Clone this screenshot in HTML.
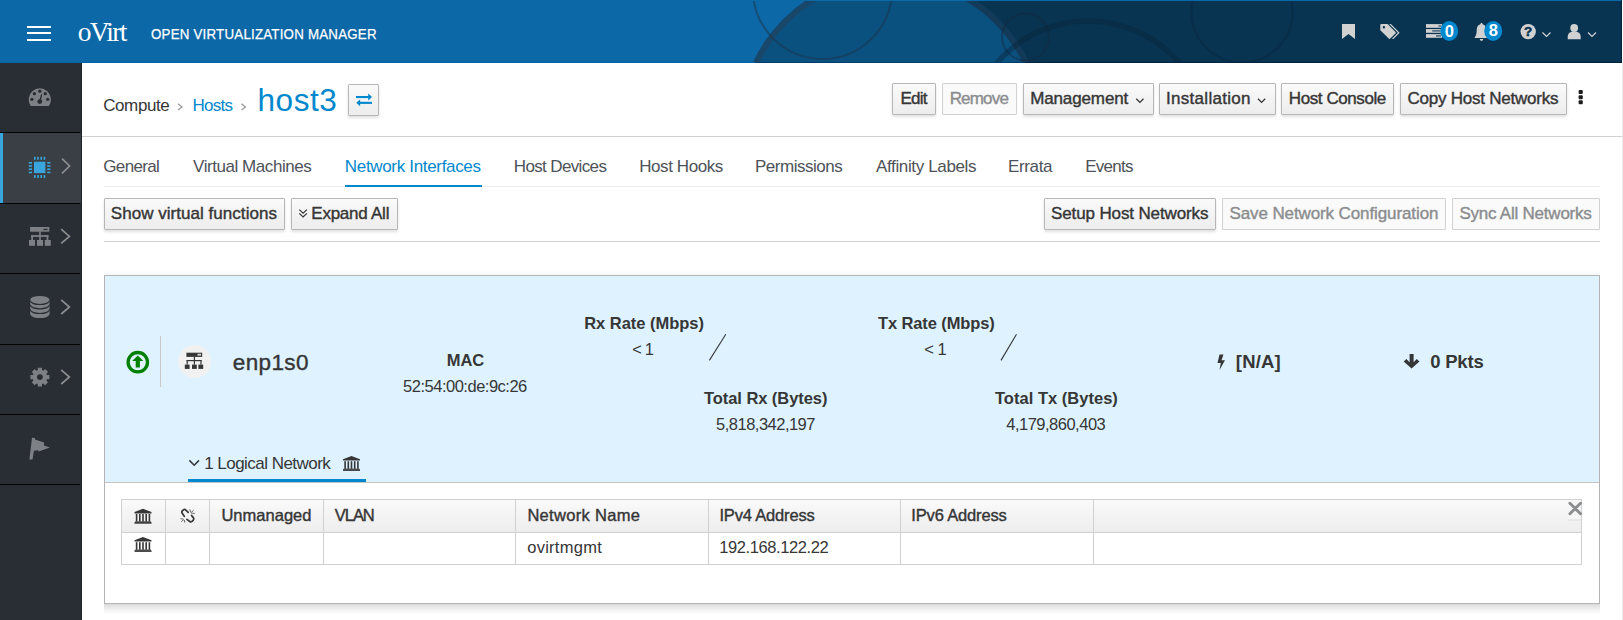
<!DOCTYPE html>
<html><head><meta charset="utf-8"><title>oVirt</title>
<style>
*{box-sizing:border-box}
html,body{margin:0;padding:0}
body{width:1623px;height:620px;overflow:hidden;position:relative;background:#fff;font-family:"Liberation Sans",sans-serif}
.a{position:absolute}
.t{position:absolute;white-space:nowrap}
.s{-webkit-text-stroke:0.4px currentColor}
.b{font-weight:bold}
.serif{font-family:"Liberation Serif",serif}
.btn{position:absolute;border:1px solid #b7b7b7;border-radius:1px;background:linear-gradient(#fafafa,#ededed);box-shadow:0 2px 3px rgba(3,3,3,.12)}
.btn.dis{background:#fafafa;border-color:#d1d1d1;box-shadow:none}
svg{position:absolute;overflow:visible}
</style></head><body>

<!-- ===== HEADER ===== -->
<div class="a" style="left:0;top:0;width:1622px;height:63px;overflow:hidden;background:#0d68a7">
<svg style="left:0;top:0" width="1623" height="63" viewBox="0 0 1623 63">
  <defs>
    <clipPath id="cl"><rect x="0" y="0" width="891" height="63"/></clipPath>
    <clipPath id="cr"><rect x="891" y="0" width="732" height="63"/></clipPath>
  </defs>
  <rect x="900" y="0" width="723" height="63" fill="#083452"/>
  <circle cx="891" cy="127" r="152.5" fill="#0b5180"/>
  <circle cx="891" cy="127" r="149.5" fill="none" stroke="rgb(40,60,80)" stroke-opacity="0.45" stroke-width="6" clip-path="url(#cl)"/>
  <circle cx="891" cy="127" r="149.5" fill="none" stroke="#133a58" stroke-width="6" clip-path="url(#cr)"/>
  <circle cx="822.5" cy="-10.5" r="69.5" fill="none" stroke="rgb(30,50,70)" stroke-opacity="0.5" stroke-width="2"/>
  <circle cx="1025.5" cy="37" r="23.5" fill="none" stroke="rgb(20,40,60)" stroke-opacity="0.45" stroke-width="2"/>
  <circle cx="1088" cy="141" r="120" fill="none" stroke="rgb(10,35,55)" stroke-opacity="0.42" stroke-width="5.5"/>
  <circle cx="1242" cy="12" r="50.5" fill="none" stroke="rgb(10,35,55)" stroke-opacity="0.35" stroke-width="2"/>
  <rect x="0" y="0" width="1623" height="1" fill="#0a6aa8"/>
  <rect x="0" y="62" width="755" height="1" fill="#0462a6"/><rect x="755" y="62" width="270" height="1" fill="#033d6a"/><rect x="1025" y="62" width="598" height="1" fill="#00223f"/>
  <rect x="1621" y="0" width="1" height="63" fill="#03243c"/>
</svg>
<!-- hamburger -->
<div class="a" style="left:27px;top:26px;width:24px;height:2px;background:#fff"></div>
<div class="a" style="left:27px;top:32px;width:24px;height:2px;background:#fff"></div>
<div class="a" style="left:27px;top:39px;width:24px;height:2px;background:#fff"></div>
</div>
<div class="t serif" style="left:77.8px;top:17.6px;font-size:27.5px;line-height:27.5px;letter-spacing:-1.7px;color:#fff">oVirt</div>

<!-- header icons -->
<svg style="left:0;top:0" width="1623" height="63">
  <g fill="#d1d1d1">
    <!-- bookmark -->
    <path d="M1342 24h13v15l-6.5-5-6.5 5z"/>
    <!-- tags -->
    <path fill-rule="evenodd" d="M1380.3 25.2Q1380.3 24.1 1381.4 24.1H1387.6L1395.7 32.3Q1396.1 32.8 1395.7 33.3L1390 38.8Q1389.5 39.3 1389 38.8L1380.3 30.2ZM1385.1 27.2A1.2 1.2 0 1 0 1382.7 27.2A1.2 1.2 0 1 0 1385.1 27.2Z"/>
    <path d="M1389.2 24.1H1390.9L1399.6 32.8L1393.5 38.9H1391.8L1397.9 32.8Z"/>
    <!-- tasks -->
    <rect x="1426" y="24.1" width="16" height="3.7"/>
    <rect x="1426" y="29.1" width="16" height="3.7"/>
    <rect x="1426" y="34.1" width="16" height="3.7"/>
    <!-- bell -->
    <path d="M1481.5 23c.8 0 1.1.6 1.1 1.3 2.5.6 3.7 2.8 3.7 5.7 0 3.4.5 5.6 2 7.2v.9h-13.6v-.9c1.5-1.6 2-3.8 2-7.2 0-2.9 1.2-5.1 3.7-5.7 0-.7.3-1.3 1.1-1.3zM1479.7 39.1h3.6a1.8 1.8 0 0 1-3.6 0z"/>
    <!-- help -->
    <circle cx="1528.2" cy="31.6" r="7.7"/>
    <!-- user -->
    <circle cx="1574.2" cy="28" r="3.9"/>
    <path d="M1567.7 39.2v-2.4c0-3.4 2.6-5.2 6.5-5.2s6.5 1.8 6.5 5.2v2.4z"/>
  </g>
  <g fill="#3d5a73">
    <rect x="1438.4" y="25.3" width="3" height="1.3"/>
    <rect x="1432.2" y="30.2" width="8" height="1.4"/>
    <rect x="1436" y="35.2" width="5" height="1.4"/>
  </g>
  <text x="1528.2" y="36.4" font-family="Liberation Sans" font-weight="bold" font-size="13.5" fill="#083452" stroke="#083452" stroke-width="0.5" text-anchor="middle">?</text>
  <g fill="none" stroke="#d1d1d1" stroke-width="1.2">
    <path d="M1542.5 32.5l4 4 4-4"/>
    <path d="M1588 32.5l4 4 4-4"/>
  </g>
  <ellipse cx="1449.2" cy="31" rx="9" ry="10" fill="#0088ce"/>
  <ellipse cx="1493.2" cy="31" rx="9" ry="10" fill="#0088ce"/>
  <text x="1449.3" y="36.5" font-family="Liberation Sans" font-weight="bold" font-size="16.5" fill="#fff" text-anchor="middle">0</text>
  <text x="1493.3" y="36.4" font-family="Liberation Sans" font-weight="bold" font-size="16.5" fill="#fff" text-anchor="middle">8</text>
</svg>

<!-- ===== SIDEBAR ===== -->
<div class="a" style="left:0;top:63px;width:82px;height:557px;background:#292e34;border-right:1px solid #1f2328"></div>
<div class="a" style="left:0;top:133px;width:81px;height:70px;background:#393f44"></div>
<div class="a" style="left:0;top:133px;width:3px;height:70px;background:#39a5dc"></div>
<div class="a" style="left:0;top:132px;width:80px;height:1px;background:#030303"></div>
<div class="a" style="left:0;top:203px;width:80px;height:1px;background:#030303"></div>
<div class="a" style="left:0;top:273px;width:80px;height:1px;background:#030303"></div>
<div class="a" style="left:0;top:344px;width:80px;height:1px;background:#030303"></div>
<div class="a" style="left:0;top:414px;width:80px;height:1px;background:#030303"></div>
<div class="a" style="left:0;top:484px;width:80px;height:1px;background:#030303"></div>
<svg style="left:0;top:0" width="82" height="620">
  <g fill="#7d8084">
    <!-- dashboard -->
    <path d="M30.7 106.1A11.2 11.2 0 1 1 48.9 106.1Z"/>
    <!-- network sitemap -->
    <rect x="30.1" y="227" width="19.2" height="4.7"/>
    <rect x="39.2" y="231.5" width="1.6" height="8.5"/>
    <rect x="31.2" y="235.1" width="17.2" height="1.8"/>
    <rect x="31.2" y="235.1" width="1.8" height="5"/>
    <rect x="46.6" y="235.1" width="1.8" height="5"/>
    <rect x="29" y="240" width="6" height="5.8"/>
    <rect x="37" y="240" width="6" height="5.8"/>
    <rect x="44.8" y="240" width="6" height="5.8"/>
    <!-- storage -->
    <rect x="30.2" y="300" width="19.3" height="14"/>
    <ellipse cx="39.85" cy="300" rx="9.65" ry="4.1"/>
    <ellipse cx="39.85" cy="314" rx="9.65" ry="4.1"/>
    <!-- gear -->
    <path fill-rule="evenodd" d="M37.77 370.12 L37.80 367.63 L42.00 367.63 L42.03 370.12 L43.33 370.65 L45.11 368.92 L48.08 371.89 L46.35 373.67 L46.88 374.97 L49.37 375.00 L49.37 379.20 L46.88 379.23 L46.35 380.53 L48.08 382.31 L45.11 385.28 L43.33 383.55 L42.03 384.08 L42.00 386.57 L37.80 386.57 L37.77 384.08 L36.47 383.55 L34.69 385.28 L31.72 382.31 L33.45 380.53 L32.92 379.23 L30.43 379.20 L30.43 375.00 L32.92 374.97 L33.45 373.67 L31.72 371.89 L34.69 368.92 L36.47 370.65 Z M42.80 377.10 A2.9 2.9 0 1 0 37.00 377.10 A2.9 2.9 0 1 0 42.80 377.10 Z"/>
    <!-- flag -->
    <path d="M32 437.8L35.1 438.1L34.9 439.6L44.1 442.6L43.9 445.5L49.9 447.5L38.7 451.4L38.1 450.2L33.9 450.8L32.5 459.5L29.4 459.5Z"/>
  </g>
  <g fill="#292e34">
    <circle cx="31.9" cy="99.3" r="1.65"/><circle cx="34.4" cy="93.7" r="1.65"/><circle cx="39.8" cy="91.2" r="1.65"/><circle cx="45.2" cy="93.7" r="1.65"/><circle cx="47.7" cy="99.3" r="1.65"/>
    <circle cx="39.8" cy="101.6" r="2.4"/>
    <path d="M39 101.5L41.1 94.3L42.2 94.6L40.6 101.9Z"/>
    <rect x="43.4" y="228.8" width="4.1" height="1.3"/>
  </g>
  <g fill="none" stroke="#292e34" stroke-width="1.2">
    <path d="M30.2 300.5A9.65 4 0 0 0 49.5 300.5"/>
    <path d="M30.2 304.8A9.65 4 0 0 0 49.5 304.8"/>
    <path d="M30.2 309.5A9.65 4 0 0 0 49.5 309.5"/>
  </g>
  <!-- cpu active -->
  <g fill="#39a5dc">
    <rect x="34" y="161.7" width="11.4" height="11.4"/>
    <rect x="34" y="156.8" width="1.6" height="3"/><rect x="37.2" y="156.8" width="1.6" height="3"/><rect x="40.4" y="156.8" width="1.6" height="3"/><rect x="43.6" y="156.8" width="1.6" height="3"/>
    <rect x="34" y="175" width="1.6" height="3"/><rect x="37.2" y="175" width="1.6" height="3"/><rect x="40.4" y="175" width="1.6" height="3"/><rect x="43.6" y="175" width="1.6" height="3"/>
    <rect x="28.8" y="162" width="3.2" height="1.6"/><rect x="28.8" y="165.2" width="3.2" height="1.6"/><rect x="28.8" y="168.4" width="3.2" height="1.6"/><rect x="28.8" y="171.6" width="3.2" height="1.6"/>
    <rect x="47.2" y="162" width="3.2" height="1.6"/><rect x="47.2" y="165.2" width="3.2" height="1.6"/><rect x="47.2" y="168.4" width="3.2" height="1.6"/><rect x="47.2" y="171.6" width="3.2" height="1.6"/>
  </g>
  <g fill="none" stroke="#8b8d8f" stroke-width="1.7">
    <path d="M62 158.6l7.6 7.4-7.6 7.4"/>
    <path d="M61.2 229.2l8.2 7.2-8.2 7"/>
    <path d="M61.2 299.8l8.2 7.2-8.2 7"/>
    <path d="M61.2 369.8l8.2 7.2-8.2 7"/>
  </g>
</svg>

<!-- ===== BREADCRUMB / TITLE ===== -->
<svg style="left:0;top:0" width="1623" height="140">
  <g fill="none" stroke="#9c9c9c" stroke-width="1.3">
    <path d="M178 103.7l4 3.2-4 3.2"/>
    <path d="M241.5 103.7l4 3.2-4 3.2"/>
  </g>
</svg>
<div class="btn" style="left:348px;top:84px;width:31px;height:32px"></div>
<svg style="left:0;top:0" width="1623" height="140">
  <g fill="#0088ce">
    <rect x="356" y="96" width="13" height="2.1"/>
    <path d="M368.2 93.6L372 97.05L368.2 100.5Z"/>
    <rect x="359" y="101.8" width="13" height="2.1"/>
    <path d="M360.1 99.4L356.3 102.85L360.1 106.3Z"/>
  </g>
</svg>
<div class="btn" style="left:892px;top:83px;width:44px;height:32px"></div>
<div class="btn dis" style="left:942px;top:83px;width:75px;height:32px"></div>
<div class="btn" style="left:1023px;top:83px;width:131px;height:32px"></div>
<div class="btn" style="left:1159px;top:83px;width:117px;height:32px"></div>
<div class="btn" style="left:1281px;top:83px;width:113px;height:32px"></div>
<div class="btn" style="left:1400px;top:83px;width:167px;height:32px"></div>
<svg style="left:0;top:0" width="1623" height="140">
  <g fill="none" stroke="#363636" stroke-width="1.3">
    <path d="M1136.3 98.8l3.6 3.6 3.6-3.6"/>
    <path d="M1258 98.8l3.6 3.6 3.6-3.6"/>
  </g>
  <g fill="#1e1e1e">
    <rect x="1578.6" y="90" width="4.2" height="4" rx="1"/>
    <rect x="1578.6" y="95.3" width="4.2" height="4" rx="1"/>
    <rect x="1578.6" y="100.3" width="4.2" height="4" rx="1"/>
  </g>
</svg>
<div class="a" style="left:82px;top:136px;width:1540px;height:1px;background:#d1d1d1"></div>

<!-- ===== TABS ===== -->
<div class="a" style="left:104px;top:186px;width:1496px;height:1px;background:#ededed"></div>
<div class="a" style="left:345px;top:185px;width:137px;height:2px;background:#0088ce"></div>

<!-- ===== TOOLBAR ===== -->
<div class="btn" style="left:104px;top:198px;width:181px;height:32px"></div>
<div class="btn" style="left:291px;top:198px;width:107px;height:32px"></div>
<div class="btn" style="left:1044px;top:198px;width:172px;height:32px"></div>
<div class="btn dis" style="left:1222px;top:198px;width:224px;height:32px"></div>
<div class="btn dis" style="left:1452px;top:198px;width:148px;height:32px"></div>
<svg style="left:0;top:0" width="1623" height="250">
  <g fill="none" stroke="#363636" stroke-width="1.2">
    <path d="M299.3 209.6l3.8 3.6 3.8-3.6"/>
    <path d="M299.3 213.4l3.8 3.6 3.8-3.6"/>
  </g>
</svg>
<div class="a" style="left:104px;top:241px;width:1496px;height:1px;background:#d1d1d1"></div>

<!-- ===== INTERFACE PANEL ===== -->
<div class="a" style="left:104px;top:604px;width:1496px;height:11px;background:linear-gradient(rgba(0,0,0,.14),rgba(0,0,0,.04) 60%,rgba(0,0,0,0))"></div>
<div class="a" style="left:104px;top:270px;width:1496px;height:5px;background:linear-gradient(rgba(0,0,0,0),rgba(0,0,0,.03))"></div>
<div class="a" style="left:104px;top:275px;width:1496px;height:329px;border:1px solid #b4b4b4;background:#fff"></div>
<div class="a" style="left:105px;top:276px;width:1494px;height:206px;background:#def3ff"></div>
<div class="a" style="left:105px;top:482px;width:1494px;height:1px;background:#c3c3c3"></div>
<div class="a" style="left:188px;top:479px;width:178px;height:3px;background:#0088ce"></div>
<svg style="left:0;top:0" width="1623" height="620">
  <!-- up status -->
  <circle cx="137.8" cy="362.2" r="9.7" fill="none" stroke="#008000" stroke-width="3.3"/>
  <path d="M137.8 355.4l-5.6 5.6h3.5v6.4h4.2v-6.4h3.5z" fill="#008000"/>
  <rect x="160" y="336" width="1" height="51" fill="#c8c8c8"/>
  <circle cx="194.6" cy="361.5" r="16.5" fill="#f1f1f1"/>
  <g fill="#363636">
    <rect x="186.4" y="352.7" width="15.8" height="4.2"/>
    <rect x="184.8" y="364.6" width="4.8" height="4.3"/>
    <rect x="192" y="364.6" width="4.8" height="4.3"/>
    <rect x="198.4" y="364.6" width="4.8" height="4.3"/>
    <rect x="193.8" y="356.9" width="1.2" height="3.7"/>
    <rect x="186.6" y="360" width="15" height="1.2"/>
    <rect x="186.6" y="360" width="1.2" height="4.6"/>
    <rect x="193.8" y="360" width="1.2" height="4.6"/>
    <rect x="200.4" y="360" width="1.2" height="4.6"/>
  </g>
  <rect x="197.5" y="353.8" width="3.6" height="1.8" fill="#d8d8d8"/>
  <g stroke="#363636" stroke-width="1.1">
    <path d="M709.4 360.4L725.8 334.3"/>
    <path d="M1001 360.4L1016.5 334.3"/>
  </g>
  <!-- bolt -->
  <path d="M1219.5 354.6h4l-2 5.6h3.5l-5.5 9.8 1.3-7h-3.3z" fill="#363636"/>
  <!-- down arrow -->
  <path d="M1409.6 354h4v8.2l3.2-3.2 2.6 2.6-7.8 7-7.9-7 2.7-2.6 3.2 3.2z" fill="#363636"/>
  <!-- logical network chevron -->
  <path d="M189.4 460.4L194.2 465.2L199 460.4" fill="none" stroke="#363636" stroke-width="1.5"/>
</svg>

<!-- ===== TABLE ===== -->
<div class="a" style="left:121px;top:499px;width:1461px;height:66px;border:1px solid #d1d1d1;background:#fff"></div>
<div class="a" style="left:122px;top:500px;width:1459px;height:33px;background:linear-gradient(#fafafa,#ededed);border-bottom:1px solid #d1d1d1"></div>
<div class="a" style="left:165px;top:500px;width:1px;height:64px;background:#d1d1d1"></div>
<div class="a" style="left:209px;top:500px;width:1px;height:64px;background:#d1d1d1"></div>
<div class="a" style="left:323px;top:500px;width:1px;height:64px;background:#d1d1d1"></div>
<div class="a" style="left:515px;top:500px;width:1px;height:64px;background:#d1d1d1"></div>
<div class="a" style="left:708px;top:500px;width:1px;height:64px;background:#d1d1d1"></div>
<div class="a" style="left:900px;top:500px;width:1px;height:64px;background:#d1d1d1"></div>
<div class="a" style="left:1093px;top:500px;width:1px;height:64px;background:#d1d1d1"></div>
<svg style="left:0;top:0" width="1623" height="620">
  <defs>
    <g id="bank">
      <path d="M8.5 0L17 3.3V4.6H0V3.3Z"/>
      <rect x="1.3" y="5.2" width="1.6" height="7.6"/>
      <rect x="4.5" y="5.2" width="1.6" height="7.6"/>
      <rect x="7.7" y="5.2" width="1.6" height="7.6"/>
      <rect x="10.9" y="5.2" width="1.6" height="7.6"/>
      <rect x="14.1" y="5.2" width="1.6" height="7.6"/>
      <rect x="0.6" y="12.6" width="15.8" height="1"/>
      <rect x="0" y="13.3" width="17" height="1.6"/>
    </g>
  </defs>
  <g fill="#363636">
    <use href="#bank" x="343" y="456"/>
    <use href="#bank" x="134.5" y="508.8"/>
    <use href="#bank" x="134.5" y="537"/>
  </g>
  <!-- unlink -->
  <g fill="none" stroke="#363636" stroke-width="1.7" stroke-linecap="round" stroke-linejoin="round">
    <path d="M188.2 512.3L185.6 509.9Q184.6 509 183.5 509.8L182.3 510.9Q181.4 511.9 182.1 513L184.3 516.4"/>
    <path d="M186.9 519.4L189.8 521.5Q190.9 522.3 192 521.4L193.3 520.1Q194.2 519 193.5 517.9L191.6 515.5"/>
  </g>
  <g stroke="#363636" stroke-width="0.9" opacity="0.8">
    <path d="M190.5 512.4L189.9 509.3M191 512.6L193.6 510.3M191.2 513.2L194.8 513.4M183.6 519.2L180.4 518.6M183.8 519.7L181.3 521.6M184.4 520L184.8 522.6"/>
  </g>
  <!-- close x -->
  <rect x="1568" y="500" width="13" height="20" fill="#f6f6f6"/>
  <rect x="1568" y="519" width="13" height="2" fill="#e8e8e8"/>
  <g stroke="#8b8d8f" stroke-width="2.9" stroke-linecap="round">
    <path d="M1569.9 503.2L1580.5 513.7M1580.5 503.2L1569.9 513.7"/>
  </g>
</svg>
<div class="a" style="left:1622px;top:0;width:1px;height:63px;background:#fff"></div><div class="a" style="left:1622px;top:63px;width:1px;height:557px;background:#eeeeee"></div>

<div class="t" id="t0" style="left:151.00px;top:26.33px;font-size:15.5px;line-height:15.5px;letter-spacing:0.239px;color:#ffffff;transform:scaleX(0.86);transform-origin:0 0;-webkit-text-stroke:0.25px #fff;">OPEN VIRTUALIZATION MANAGER</div>
<div class="t" id="t1" style="left:103.20px;top:97.05px;font-size:17px;line-height:17px;letter-spacing:-0.400px;color:#363636;">Compute</div>
<div class="t" id="t2" style="left:192.48px;top:97.05px;font-size:17px;line-height:17px;letter-spacing:-0.745px;color:#0088ce;">Hosts</div>
<div class="t" id="t3" style="left:257.40px;top:85.22px;font-size:31.5px;line-height:31.5px;letter-spacing:0.600px;color:#0088ce;">host3</div>
<div class="t s" id="t4" style="left:900.40px;top:90.05px;font-size:17px;line-height:17px;letter-spacing:-0.703px;color:#363636;">Edit</div>
<div class="t s" id="t5" style="left:949.68px;top:90.05px;font-size:17px;line-height:17px;letter-spacing:-0.826px;color:#8b8d8f;">Remove</div>
<div class="t s" id="t6" style="left:1030.14px;top:90.05px;font-size:17px;line-height:17px;letter-spacing:-0.117px;color:#363636;">Management</div>
<div class="t s" id="t7" style="left:1165.96px;top:90.05px;font-size:17px;line-height:17px;letter-spacing:0.301px;color:#363636;">Installation</div>
<div class="t s" id="t8" style="left:1288.86px;top:90.05px;font-size:17px;line-height:17px;letter-spacing:-0.427px;color:#363636;">Host Console</div>
<div class="t s" id="t9" style="left:1407.48px;top:90.05px;font-size:17px;line-height:17px;letter-spacing:-0.233px;color:#363636;">Copy Host Networks</div>
<div class="t" id="t10" style="left:103.28px;top:158.05px;font-size:17px;line-height:17px;letter-spacing:-0.647px;color:#4d5258;">General</div>
<div class="t" id="t11" style="left:193.10px;top:158.05px;font-size:17px;line-height:17px;letter-spacing:-0.447px;color:#4d5258;">Virtual Machines</div>
<div class="t" id="t12" style="left:344.84px;top:158.05px;font-size:17px;line-height:17px;letter-spacing:-0.329px;color:#0088ce;">Network Interfaces</div>
<div class="t" id="t13" style="left:513.76px;top:158.05px;font-size:17px;line-height:17px;letter-spacing:-0.637px;color:#4d5258;">Host Devices</div>
<div class="t" id="t14" style="left:639.20px;top:158.05px;font-size:17px;line-height:17px;letter-spacing:-0.410px;color:#4d5258;">Host Hooks</div>
<div class="t" id="t15" style="left:754.94px;top:158.05px;font-size:17px;line-height:17px;letter-spacing:-0.472px;color:#4d5258;">Permissions</div>
<div class="t" id="t16" style="left:876.10px;top:158.05px;font-size:17px;line-height:17px;letter-spacing:-0.369px;color:#4d5258;">Affinity Labels</div>
<div class="t" id="t17" style="left:1008.12px;top:158.05px;font-size:17px;line-height:17px;letter-spacing:-0.382px;color:#4d5258;">Errata</div>
<div class="t" id="t18" style="left:1085.20px;top:158.05px;font-size:17px;line-height:17px;letter-spacing:-0.752px;color:#4d5258;">Events</div>
<div class="t s" id="t19" style="left:110.86px;top:205.05px;font-size:17px;line-height:17px;letter-spacing:0.033px;color:#363636;">Show virtual functions</div>
<div class="t s" id="t20" style="left:311.32px;top:205.05px;font-size:17px;line-height:17px;letter-spacing:-0.248px;color:#363636;">Expand All</div>
<div class="t s" id="t21" style="left:1051.04px;top:205.05px;font-size:17px;line-height:17px;letter-spacing:-0.126px;color:#363636;">Setup Host Networks</div>
<div class="t s" id="t22" style="left:1229.48px;top:205.05px;font-size:17px;line-height:17px;letter-spacing:-0.108px;color:#8b8d8f;">Save Network Configuration</div>
<div class="t s" id="t23" style="left:1459.40px;top:205.05px;font-size:17px;line-height:17px;letter-spacing:-0.225px;color:#8b8d8f;">Sync All Networks</div>
<div class="t s" id="t24" style="left:232.86px;top:351.77px;font-size:22.5px;line-height:22.5px;letter-spacing:0.346px;color:#363636;">enp1s0</div>
<div class="t b" id="t25" style="left:446.74px;top:352.48px;font-size:16.5px;line-height:16.5px;letter-spacing:-0.080px;color:#363636;">MAC</div>
<div class="t" id="t26" style="left:403.10px;top:377.98px;font-size:16.5px;line-height:16.5px;letter-spacing:-0.495px;color:#363636;">52:54:00:de:9c:26</div>
<div class="t b" id="t27" style="left:584.20px;top:315.48px;font-size:16.5px;line-height:16.5px;letter-spacing:-0.031px;color:#363636;">Rx Rate (Mbps)</div>
<div class="t" id="t28" style="left:632.20px;top:341.48px;font-size:16.5px;line-height:16.5px;letter-spacing:-0.810px;color:#363636;">&lt; 1</div>
<div class="t b" id="t29" style="left:704.00px;top:389.98px;font-size:16.5px;line-height:16.5px;letter-spacing:-0.064px;color:#363636;">Total Rx (Bytes)</div>
<div class="t" id="t30" style="left:716.10px;top:415.78px;font-size:16.5px;line-height:16.5px;letter-spacing:-0.513px;color:#363636;">5,818,342,197</div>
<div class="t b" id="t31" style="left:878.00px;top:315.48px;font-size:16.5px;line-height:16.5px;letter-spacing:-0.112px;color:#363636;">Tx Rate (Mbps)</div>
<div class="t" id="t32" style="left:924.20px;top:341.48px;font-size:16.5px;line-height:16.5px;letter-spacing:-0.450px;color:#363636;">&lt; 1</div>
<div class="t b" id="t33" style="left:995.00px;top:389.98px;font-size:16.5px;line-height:16.5px;letter-spacing:0.020px;color:#363636;">Total Tx (Bytes)</div>
<div class="t" id="t34" style="left:1006.28px;top:415.78px;font-size:16.5px;line-height:16.5px;letter-spacing:-0.505px;color:#363636;">4,179,860,403</div>
<div class="t b" id="t35" style="left:1235.84px;top:352.67px;font-size:18.5px;line-height:18.5px;letter-spacing:0.178px;color:#363636;">[N/A]</div>
<div class="t b" id="t36" style="left:1430.20px;top:352.67px;font-size:18.5px;line-height:18.5px;letter-spacing:-0.196px;color:#363636;">0 Pkts</div>
<div class="t" id="t37" style="left:204.20px;top:455.05px;font-size:17px;line-height:17px;letter-spacing:-0.528px;color:#363636;">1 Logical Network</div>
<div class="t s" id="t38" style="left:221.40px;top:506.98px;font-size:16.5px;line-height:16.5px;letter-spacing:0.025px;color:#363636;">Unmanaged</div>
<div class="t s" id="t39" style="left:334.84px;top:506.98px;font-size:16.5px;line-height:16.5px;letter-spacing:-1.047px;color:#363636;">VLAN</div>
<div class="t s" id="t40" style="left:527.40px;top:506.98px;font-size:16.5px;line-height:16.5px;letter-spacing:0.309px;color:#363636;">Network Name</div>
<div class="t s" id="t41" style="left:719.40px;top:506.98px;font-size:16.5px;line-height:16.5px;letter-spacing:-0.168px;color:#363636;">IPv4 Address</div>
<div class="t s" id="t42" style="left:911.32px;top:506.98px;font-size:16.5px;line-height:16.5px;letter-spacing:-0.161px;color:#363636;">IPv6 Address</div>
<div class="t" id="t43" style="left:527.20px;top:539.48px;font-size:16.5px;line-height:16.5px;letter-spacing:0.275px;color:#363636;">ovirtmgmt</div>
<div class="t" id="t44" style="left:719.20px;top:539.48px;font-size:16.5px;line-height:16.5px;letter-spacing:-0.396px;color:#363636;">192.168.122.22</div>
</body></html>
